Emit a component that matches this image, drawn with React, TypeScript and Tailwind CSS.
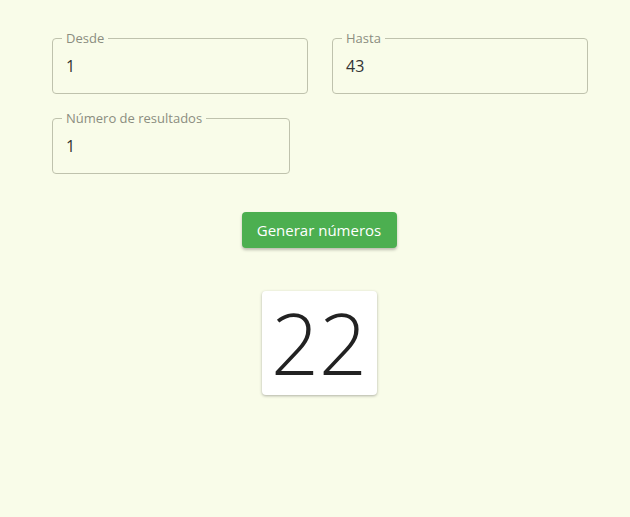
import React from 'react';

interface FieldProps {
  label: string;
  value: string;
  width: string;
}

function Field({ label, value, width }: FieldProps) {
  return (
    <fieldset className={`${width} h-[64px] shrink-0 rounded-[4px] border border-[#bfc2ad] pl-[13px] pr-3 m-0`}>
      <legend className="ml-[-4px] px-[4px] text-[13px] leading-[16px] text-[#8b8d80]">{label}</legend>
      <div className="pt-[8px] text-[16px] leading-[24px] text-[#333]">{value}</div>
    </fieldset>
  );
}

export default function App() {
  return (
    <div className="min-h-[517px] w-[630px] bg-[#f9fce9] font-['Open_Sans',sans-serif]">
      <div className="pl-[52px] pr-[42px] pt-[30px]">
        {/* Inputs */}
        <div className="flex gap-[24px]">
          <Field label="Desde" value="1" width="w-[256px]" />
          <Field label="Hasta" value="43" width="w-[256px]" />
        </div>
        <div className="mt-4">
          <Field label="Número de resultados" value="1" width="w-[238px]" />
        </div>

        {/* Action */}
        <div className="mt-[38px] flex justify-center pr-[2px]">
          <button className="h-[36px] w-[155px] rounded-[4px] bg-[#4caf50] text-[15px] text-white shadow-[0_2px_3px_rgba(0,0,0,0.25)]">
            Generar números
          </button>
        </div>

        {/* Result */}
        <div className="mt-[43px] flex justify-center pr-[2px]">
          <div className="flex h-[104px] w-[115px] items-center justify-center rounded-[4px] bg-white shadow-[0_1px_3px_rgba(0,0,0,0.3)]">
            <span className="text-[84px] font-light leading-none text-[#222]">22</span>
          </div>
        </div>
      </div>
    </div>
  );
}
